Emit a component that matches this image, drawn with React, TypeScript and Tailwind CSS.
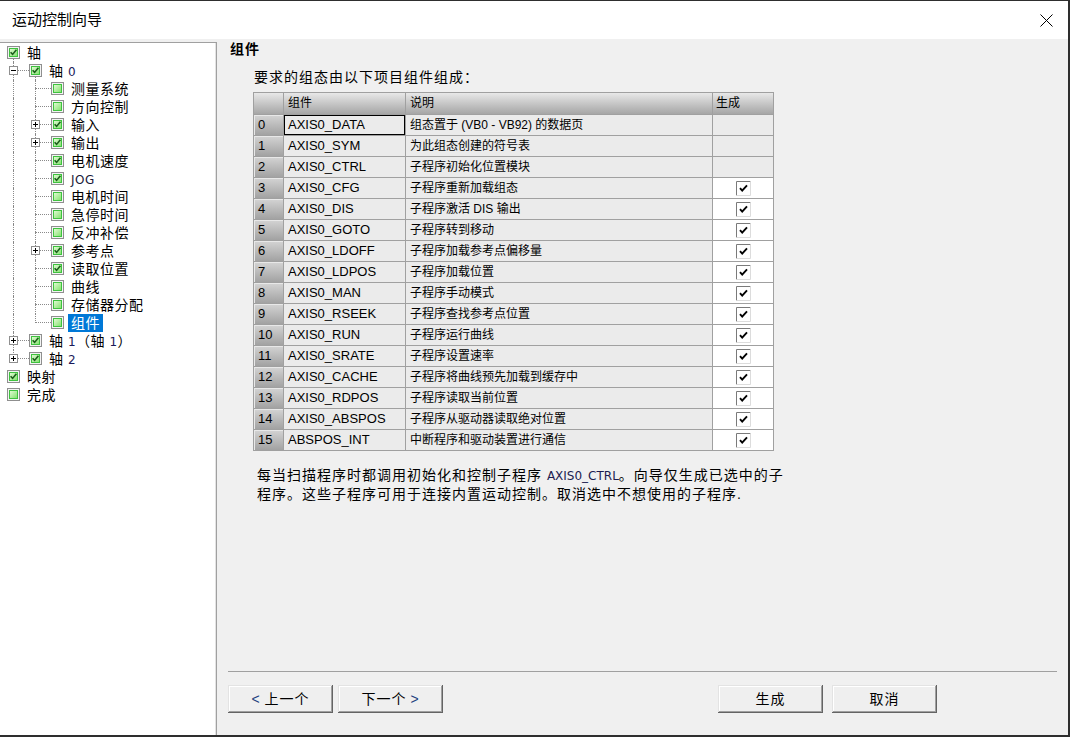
import React from 'react';

type TreeRow = {
  label: React.ReactNode;
  level: number;
  checked: boolean;
  pass?: boolean[];
  conn?: 'full' | 'half';
  exp?: '+' | '-';
  down?: boolean;
  selected?: boolean;
};

const treeRows: TreeRow[] = [
  { label: '轴', level: 0, checked: true, down: true },
  { label: <>轴 <span className="font-['DejaVu_Sans',sans-serif] text-[12px] text-[#1a1a5a]">0</span></>, level: 1, checked: true, pass: [], conn: 'full', exp: '-', down: true },
  { label: '测量系统', level: 2, checked: false, pass: [true], conn: 'full' },
  { label: '方向控制', level: 2, checked: false, pass: [true], conn: 'full' },
  { label: '输入', level: 2, checked: true, pass: [true], conn: 'full', exp: '+' },
  { label: '输出', level: 2, checked: true, pass: [true], conn: 'full', exp: '+' },
  { label: '电机速度', level: 2, checked: true, pass: [true], conn: 'full' },
  { label: <span className="font-['DejaVu_Sans',sans-serif] text-[12px] text-[#1a1a3a]">JOG</span>, level: 2, checked: true, pass: [true], conn: 'full' },
  { label: '电机时间', level: 2, checked: false, pass: [true], conn: 'full' },
  { label: '急停时间', level: 2, checked: false, pass: [true], conn: 'full' },
  { label: '反冲补偿', level: 2, checked: false, pass: [true], conn: 'full' },
  { label: '参考点', level: 2, checked: true, pass: [true], conn: 'full', exp: '+' },
  { label: '读取位置', level: 2, checked: true, pass: [true], conn: 'full' },
  { label: '曲线', level: 2, checked: false, pass: [true], conn: 'full' },
  { label: '存储器分配', level: 2, checked: false, pass: [true], conn: 'full' },
  { label: '组件', level: 2, checked: false, pass: [true], conn: 'half', selected: true },
  { label: <>轴 <span className="font-['DejaVu_Sans',sans-serif] text-[12px] text-[#1a1a5a]">1</span>（轴 <span className="font-['DejaVu_Sans',sans-serif] text-[12px] text-[#1a1a5a]">1</span>）</>, level: 1, checked: true, pass: [], conn: 'full', exp: '+' },
  { label: <>轴 <span className="font-['DejaVu_Sans',sans-serif] text-[12px] text-[#1a1a5a]">2</span></>, level: 1, checked: true, pass: [], conn: 'half', exp: '+' },
  { label: '映射', level: 0, checked: true },
  { label: '完成', level: 0, checked: false },
];

const tableRows: [string, string, boolean | null][] = [
  ['AXIS0_DATA', '组态置于 (VB0 - VB92) 的数据页', null],
  ['AXIS0_SYM', '为此组态创建的符号表', null],
  ['AXIS0_CTRL', '子程序初始化位置模块', null],
  ['AXIS0_CFG', '子程序重新加载组态', true],
  ['AXIS0_DIS', '子程序激活 DIS 输出', true],
  ['AXIS0_GOTO', '子程序转到移动', true],
  ['AXIS0_LDOFF', '子程序加载参考点偏移量', true],
  ['AXIS0_LDPOS', '子程序加载位置', true],
  ['AXIS0_MAN', '子程序手动模式', true],
  ['AXIS0_RSEEK', '子程序查找参考点位置', true],
  ['AXIS0_RUN', '子程序运行曲线', true],
  ['AXIS0_SRATE', '子程序设置速率', true],
  ['AXIS0_CACHE', '子程序将曲线预先加载到缓存中', true],
  ['AXIS0_RDPOS', '子程序读取当前位置', true],
  ['AXIS0_ABSPOS', '子程序从驱动器读取绝对位置', true],
  ['ABSPOS_INT', '中断程序和驱动装置进行通信', true],
];

function TreeCheck({ checked }: { checked: boolean }) {
  return (
    <svg width="13" height="13" viewBox="0 0 13 13" className="block">
      <defs>
        <linearGradient id="tcg" x1="0" y1="0" x2="1" y2="1">
          <stop offset="0" stopColor="#e6fcd8" />
          <stop offset="1" stopColor="#7fe06a" />
        </linearGradient>
      </defs>
      <rect x="0.5" y="0.5" width="12" height="12" fill="#f4f4f4" stroke="#8f8f8f" />
      <rect x="2.5" y="2.5" width="8" height="8" fill="url(#tcg)" stroke="#3fc23f" />
      {checked && <path d="M3.6 6.2 L5.6 8.4 L9.4 3.8" fill="none" stroke="#1d5e1d" strokeWidth="1.6" />}
    </svg>
  );
}

function Expander({ plus }: { plus: boolean }) {
  return (
    <div className="absolute left-[7px] top-[4px] w-[9px] h-[9px] border border-[#8f8f8f] bg-white">
      <div className="absolute left-[1px] top-[3px] w-[5px] h-px bg-black" />
      {plus && <div className="absolute left-[3px] top-[1px] w-px h-[5px] bg-black" />}
    </div>
  );
}

function TreeLine({ row }: { row: TreeRow }) {
  return (
    <div className="flex h-[18px] pl-[2px] items-stretch">
      {(row.pass ?? []).map((p, i) => (
        <div key={i} className="relative w-[22px] shrink-0">
          {p && <div className="absolute left-[11px] top-0 h-[18px] border-l border-dotted border-[#8a8a8a]" />}
        </div>
      ))}
      {row.conn && (
        <div className="relative w-[22px] shrink-0">
          <div className={row.conn === 'full' ? 'absolute left-[11px] top-0 h-[18px] border-l border-dotted border-[#8a8a8a]' : 'absolute left-[11px] top-0 h-[9px] border-l border-dotted border-[#8a8a8a]'} />
          <div className="absolute left-[11px] top-[8px] w-[16px] border-t border-dotted border-[#8a8a8a]" />
          {row.exp && <Expander plus={row.exp === '+'} />}
        </div>
      )}
      <div className="relative w-[25px] shrink-0 pl-[5px] pt-[2px]">
        <TreeCheck checked={row.checked} />
        {row.down && <div className="absolute left-[11px] top-[15px] h-[3px] border-l border-dotted border-[#8a8a8a]" />}
      </div>
      <span
        className={
          row.selected
            ? 'leading-[18px] text-[14px] tracking-[0.5px] bg-[#0078d7] text-white px-[3px] -ml-[3px] whitespace-nowrap'
            : 'leading-[18px] text-[14px] tracking-[0.5px] text-black whitespace-nowrap'
        }
      >
        {row.label}
      </span>
    </div>
  );
}

function GenCheck() {
  return (
    <svg width="15" height="15" viewBox="0 0 15 15" className="block">
      <rect x="0" y="0" width="15" height="15" fill="#fff" />
      <path d="M0.5 14.5 V0.5 H14.5" fill="none" stroke="#7a7a7a" />
      <path d="M0.5 14.5 H14.5 V0.5" fill="none" stroke="#dcdcdc" />
      <path d="M4 7.2 L6.2 9.6 L11 4.4" fill="none" stroke="#000" strokeWidth="1.9" />
    </svg>
  );
}

function Button({ children }: { children: React.ReactNode }) {
  return (
    <button className="w-[105px] h-[28px] bg-[#efefef] text-[14px] tracking-[1px] text-black flex items-center justify-center shadow-[inset_-1px_-1px_#646464,inset_1px_1px_#e3e3e3,inset_-2px_-2px_#a0a0a0,inset_2px_2px_#ffffff]">
      {children}
    </button>
  );
}

export default function App() {
  return (
    <div className="w-[1070px] h-[737px] bg-[#2e2e2e] pt-px pr-[2px] pb-[2px] font-['Liberation_Sans','Noto_Sans_CJK_SC',sans-serif] overflow-hidden">
      <div className="w-[1068px] h-[734px] flex flex-col bg-[#f0f0f0]">
        {/* Title bar */}
        <div className="h-[38px] bg-white flex items-center justify-between pl-[12px] pr-[15px] shrink-0">
          <span className="text-[15px] text-black">运动控制向导</span>
          <svg width="13" height="13" viewBox="0 0 13 13">
            <path d="M0.5 0.5 L12.5 12.5 M12.5 0.5 L0.5 12.5" stroke="#000" strokeWidth="1" />
          </svg>
        </div>

        {/* Body */}
        <div className="flex-1 flex min-h-0">
          {/* Tree */}
          <div className="w-[217px] shrink-0 mt-[3px] bg-white border-t border-r border-[#a0a0a0] shadow-[inset_-1px_0_#e3e3e3] pt-px">
            {treeRows.map((r, i) => (
              <TreeLine key={i} row={r} />
            ))}
          </div>

          {/* Right content */}
          <div className="flex-1 flex flex-col min-w-0">
            <div className="mt-px ml-[13px] h-[18px] leading-[18px] text-[14px] font-bold tracking-[1px] text-black">组件</div>
            <div className="mt-[10px] ml-[37px] h-[18px] leading-[18px] text-[14px] tracking-[1px] text-black">要求的组态由以下项目组件组成：</div>

            <div className="mt-[6px] ml-[36px] w-[521px] grid grid-cols-[30px_122px_307px_61px] border-l border-t border-[#a0a0a0]">
              <div className="h-[22px] border-r border-b border-[#a0a0a0] bg-linear-to-b from-[#e8e8e8] to-[#a6a6a6]" />
              <div className="h-[22px] border-r border-b border-[#a0a0a0] bg-linear-to-b from-[#e8e8e8] to-[#a6a6a6] pl-[4px] text-[12px] leading-[21px] text-black">组件</div>
              <div className="h-[22px] border-r border-b border-[#a0a0a0] bg-linear-to-b from-[#e8e8e8] to-[#a6a6a6] pl-[4px] text-[12px] leading-[21px] text-black">说明</div>
              <div className="h-[22px] border-r border-b border-[#a0a0a0] bg-linear-to-b from-[#e8e8e8] to-[#a6a6a6] pl-[3px] text-[12px] leading-[21px] text-black">生成</div>
              {tableRows.map(([name, desc, gen], i) => (
                <React.Fragment key={i}>
                  <div className="h-[21px] border-r border-b border-[#a0a0a0] bg-linear-to-b from-[#d4d4d4] to-[#a2a2a2] shadow-[inset_1px_1px_#e8e8e8] pl-[4px] text-[13px] leading-[20px] text-black">{i}</div>
                  <div className={i === 0 ? 'h-[21px] border-r border-b border-[#a0a0a0] bg-[#ebebeb] shadow-[inset_0_0_0_1px_#000] pl-[4px] text-[13px] leading-[20px] text-black' : 'h-[21px] border-r border-b border-[#a0a0a0] bg-[#ebebeb] pl-[4px] text-[13px] leading-[20px] text-black'}>{name}</div>
                  <div className="h-[21px] border-r border-b border-[#a0a0a0] bg-[#ebebeb] pl-[4px] text-[12px] leading-[20px] text-black whitespace-nowrap">{desc}</div>
                  <div className={gen ? 'h-[21px] border-r border-b border-[#a0a0a0] bg-white flex items-center justify-center' : 'h-[21px] border-r border-b border-[#a0a0a0] bg-[#ebebeb]'}>
                    {gen && <GenCheck />}
                  </div>
                </React.Fragment>
              ))}
            </div>

            <div className="mt-[15px] ml-[40px] text-[14px] tracking-[1px] leading-[18px] text-black whitespace-nowrap">
              每当扫描程序时都调用初始化和控制子程序 <span className="font-['DejaVu_Sans',sans-serif] text-[12px] tracking-normal text-[#1c1c50]">AXIS0_CTRL</span>。向导仅生成已选中的子
              <br />
              程序。这些子程序可用于连接内置运动控制。取消选中不想使用的子程序.
            </div>

            <div className="mt-auto pb-[22px]">
              <div className="ml-[11px] mr-[11px] h-px bg-[#a0a0a0]" />
              <div className="mt-[13px] ml-[11px] mr-[131px] flex items-center justify-between">
                <div className="flex gap-[5px]">
                  <Button><span className="text-[#1f3f7f] mr-[4px]">&lt;</span>上一个</Button>
                  <Button>下一个<span className="text-[#1f3f7f] ml-[4px]">&gt;</span></Button>
                </div>
                <div className="flex gap-[9px]">
                  <Button>生成</Button>
                  <Button>取消</Button>
                </div>
              </div>
            </div>
          </div>
        </div>
      </div>
    </div>
  );
}
